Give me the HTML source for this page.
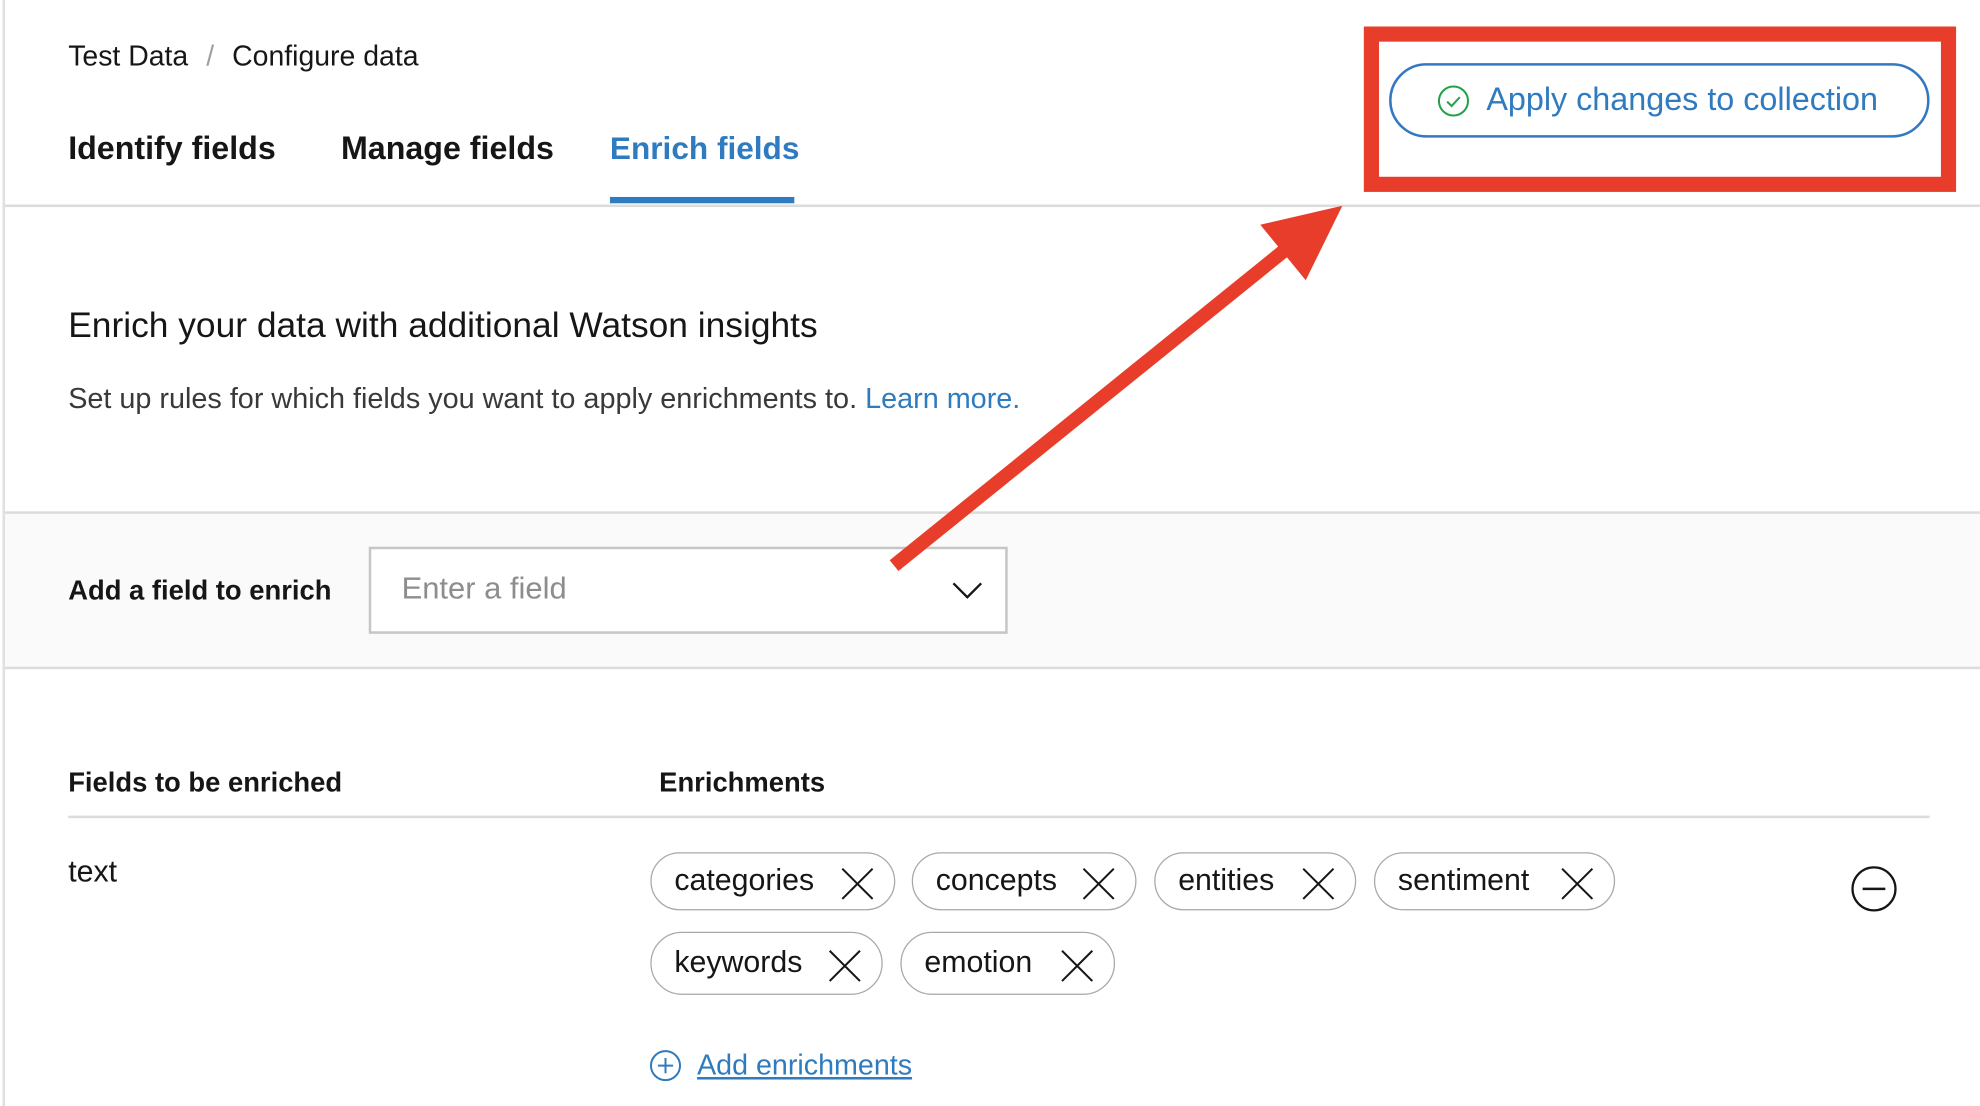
<!DOCTYPE html>
<html><head><meta charset="utf-8"><style>
html,body{margin:0;padding:0;background:#fff;overflow:hidden;}
body{width:1980px;height:1106px;}
#w{position:absolute;left:0;top:0;width:1568px;height:876px;transform:scale(1.2628,1.2626);transform-origin:0 0;font-family:"Liberation Sans",Arial,sans-serif;color:#161616;}
.a{position:absolute;white-space:nowrap;}
.chip{position:absolute;height:46px;border:1.5px solid #a8a8a8;border-radius:25px;box-sizing:border-box;font-size:24px;line-height:44px;padding-left:18px;color:#161616;}
.chip svg{position:absolute;top:11px;right:16px;}
</style></head><body><div id="w">
<div class="a" style="left:2px;top:0;width:2px;height:876px;background:#e0e0e0"></div>
<div class="a" style="left:54px;top:32px;font-size:22.5px;">Test Data <span style="color:#a0a0a0;margin:0 8px">/</span> Configure data</div>
<div class="a" style="left:54px;top:104px;font-size:25.5px;font-weight:bold;">Identify fields</div>
<div class="a" style="left:270px;top:104px;font-size:25.5px;font-weight:bold;">Manage fields</div>
<div class="a" style="left:483px;top:104px;font-size:25px;font-weight:bold;color:#2f7bbf;">Enrich fields</div>
<div class="a" style="left:483px;top:156px;width:146px;height:5px;background:#2f7bbf"></div>
<div class="a" style="left:4px;top:162px;width:1564px;height:2px;background:#dcdcdc"></div>

<div class="a" style="left:1080px;top:21px;width:469px;height:131px;box-sizing:border-box;border:12px solid #e83d2a;"></div>
<div class="a" style="left:1100px;top:50px;width:428px;height:59px;box-sizing:border-box;border:2px solid #3478c0;border-radius:30px;"></div>
<svg class="a" style="left:1138px;top:67px" width="26" height="26" viewBox="0 0 26 26"><circle cx="13" cy="13" r="11.5" fill="none" stroke="#24a148" stroke-width="1.6"/><path d="M8 13.5l3.5 3.5 6.5-7" fill="none" stroke="#24a148" stroke-width="1.6"/></svg>
<div class="a" style="left:1177px;top:65px;font-size:25.6px;color:#2f7bbf;">Apply changes to collection</div>

<div class="a" style="left:54px;top:242px;font-size:28px;">Enrich your data with additional Watson insights</div>
<div class="a" style="left:54px;top:302px;font-size:22.8px;color:#393939;">Set up rules for which fields you want to apply enrichments to. <span style="color:#2f7bbf">Learn more.</span></div>

<div class="a" style="left:4px;top:405px;width:1564px;height:121px;background:#fafafa;border-top:2px solid #dcdcdc;border-bottom:2px solid #dcdcdc;"></div>
<div class="a" style="left:54px;top:455px;font-size:21.7px;font-weight:bold;">Add a field to enrich</div>
<div class="a" style="left:292px;top:433px;width:506px;height:69px;box-sizing:border-box;border:2px solid #c6c6c6;background:#fff;"></div>
<div class="a" style="left:318px;top:453px;font-size:24.5px;color:#8d8d8d;">Enter a field</div>
<svg class="a" style="left:754px;top:460px" width="24" height="16"><path d="M1 2l11 11 11-11" fill="none" stroke="#161616" stroke-width="1.8"/></svg>

<svg class="a" style="left:0;top:0" width="1568" height="876"><line x1="708" y1="448" x2="1025" y2="192" stroke="#e83d2a" stroke-width="11"/><polygon points="1063,163 998,178 1034,222" fill="#e83d2a"/></svg>

<div class="a" style="left:54px;top:607px;font-size:21.7px;font-weight:bold;">Fields to be enriched</div>
<div class="a" style="left:522px;top:607px;font-size:21.7px;font-weight:bold;">Enrichments</div>
<div class="a" style="left:54px;top:646px;width:1474px;height:2px;background:#dcdcdc"></div>
<div class="a" style="left:54px;top:677px;font-size:24px;">text</div>

<div class="chip" style="left:515px;top:675px;width:194px">categories<svg width="26" height="26"><path d="M1 1l24 24M25 1L1 25" stroke="#161616" stroke-width="1.6"/></svg></div>
<div class="chip" style="left:722px;top:675px;width:178px">concepts<svg width="26" height="26"><path d="M1 1l24 24M25 1L1 25" stroke="#161616" stroke-width="1.6"/></svg></div>
<div class="chip" style="left:914px;top:675px;width:160px">entities<svg width="26" height="26"><path d="M1 1l24 24M25 1L1 25" stroke="#161616" stroke-width="1.6"/></svg></div>
<div class="chip" style="left:1088px;top:675px;width:191px">sentiment<svg width="26" height="26"><path d="M1 1l24 24M25 1L1 25" stroke="#161616" stroke-width="1.6"/></svg></div>
<div class="chip" style="left:515px;top:738px;width:184px;height:50px;line-height:48px">keywords<svg style="top:13px" width="26" height="26"><path d="M1 1l24 24M25 1L1 25" stroke="#161616" stroke-width="1.6"/></svg></div>
<div class="chip" style="left:713px;top:738px;width:170px;height:50px;line-height:48px">emotion<svg style="top:13px" width="26" height="26"><path d="M1 1l24 24M25 1L1 25" stroke="#161616" stroke-width="1.6"/></svg></div>

<svg class="a" style="left:1465px;top:685px" width="38" height="38"><circle cx="19" cy="19" r="17" fill="none" stroke="#161616" stroke-width="1.8"/><line x1="10" y1="19" x2="28" y2="19" stroke="#161616" stroke-width="2"/></svg>

<svg class="a" style="left:514px;top:831px" width="26" height="26"><circle cx="13" cy="13" r="11.5" fill="none" stroke="#2f7bbf" stroke-width="1.6"/><path d="M13 7v12M7 13h12" stroke="#2f7bbf" stroke-width="1.6"/></svg>
<div class="a" style="left:552px;top:830px;font-size:22.7px;color:#2f7bbf;text-decoration:underline;">Add enrichments</div>
</div></body></html>
